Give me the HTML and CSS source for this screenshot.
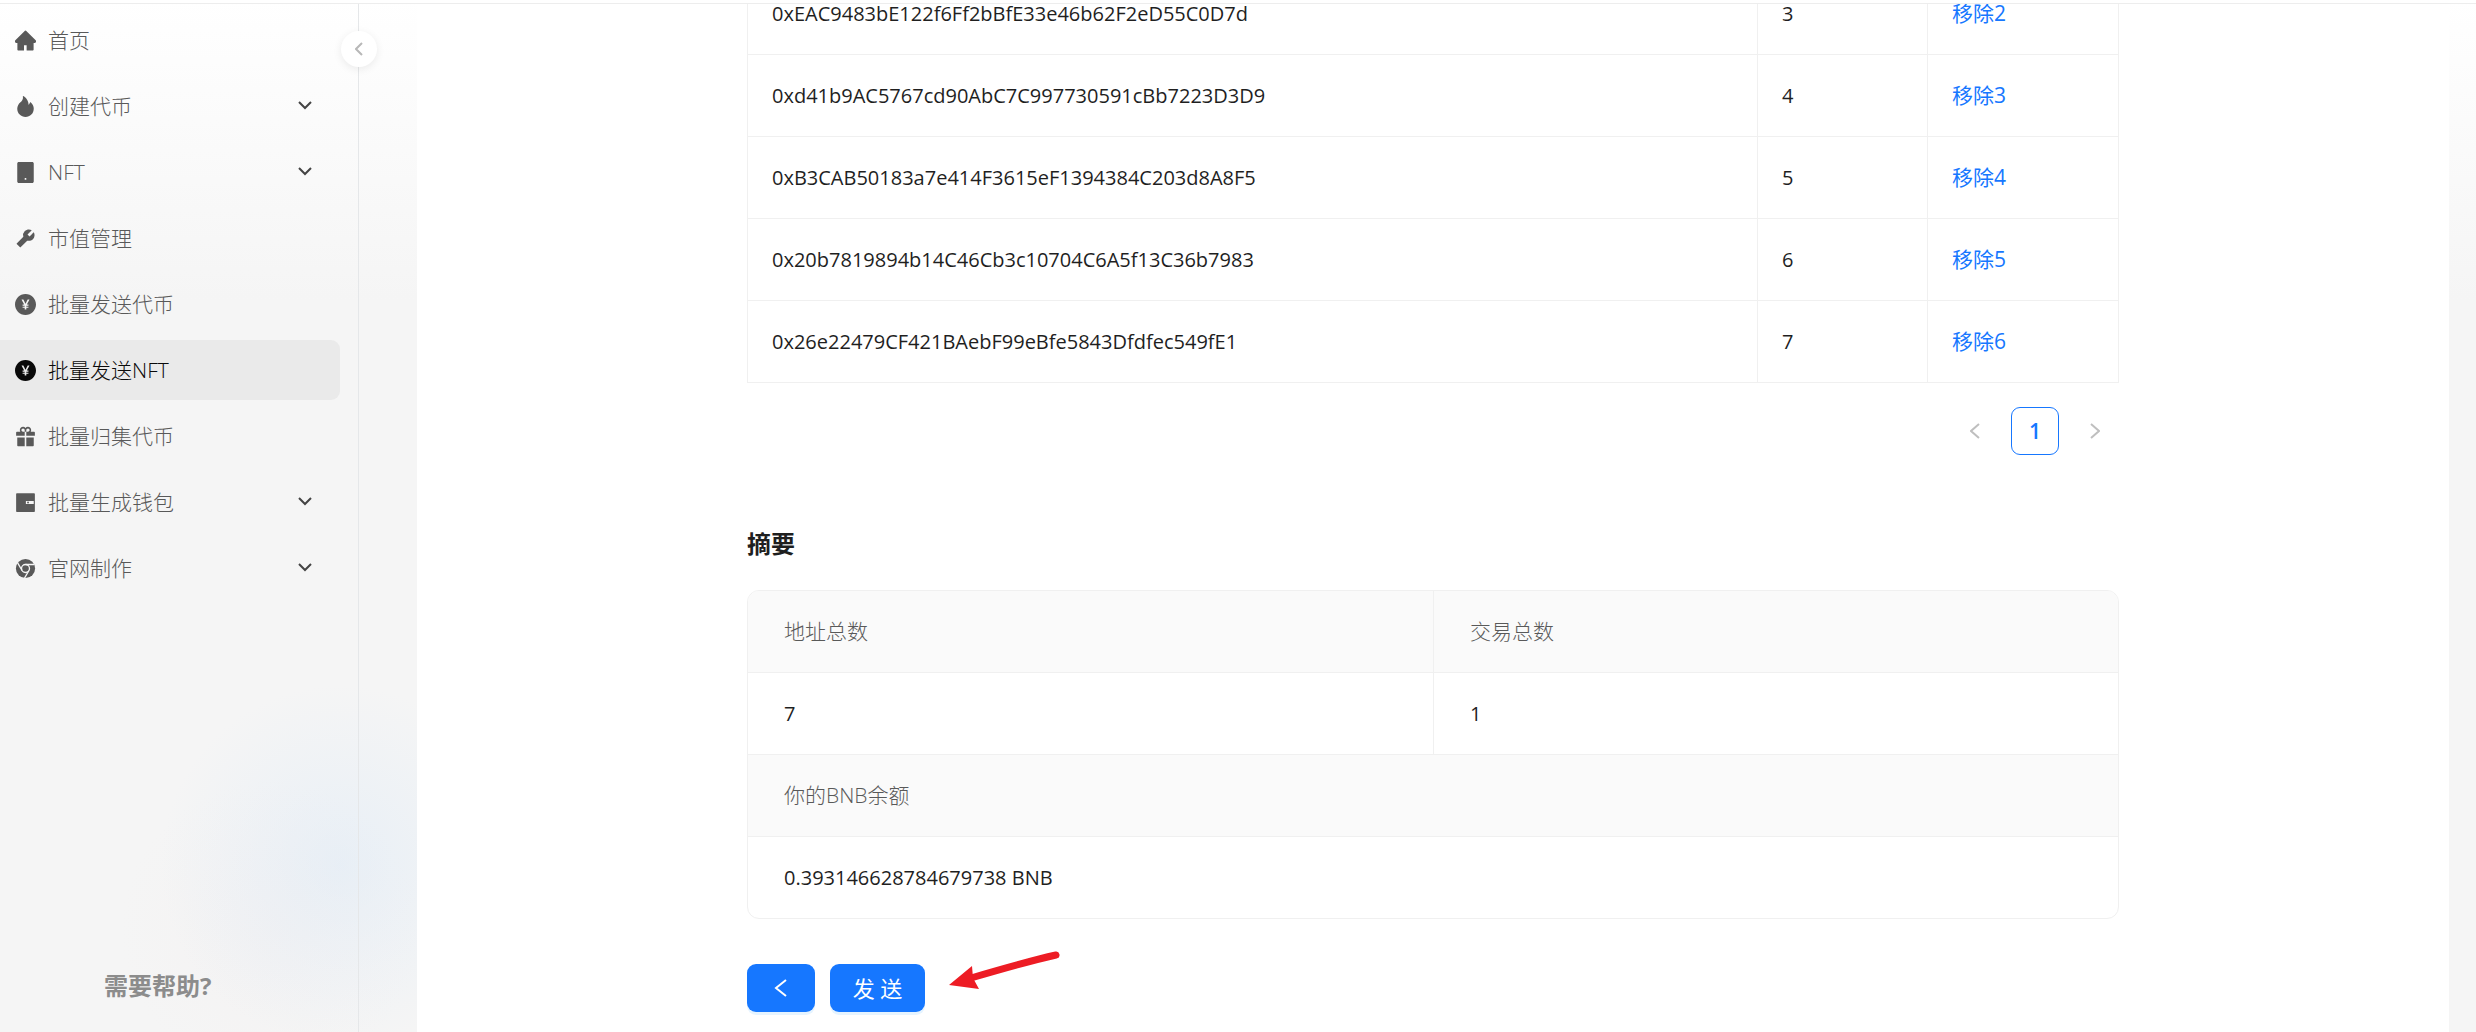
FILE: index.html
```html
<!DOCTYPE html>
<html lang="zh-CN">
<head>
  <meta charset="UTF-8" />
  <meta name="viewport" content="width=device-width, initial-scale=1.0"/>
  <title>批量发送NFT</title>
  <link rel="stylesheet" href="styles.css">
</head>
<body>
  <header class="topbar"></header>

  <div class="layout">
    <aside class="sidebar">
      <nav class="menu">
        <a class="menu-item" href="#">
          <svg class="icon" viewBox="64 64 896 896"><path d="M946.5 505L534.6 93.4a31.93 31.93 0 00-45.2 0L77.5 505c-12 12-18.8 28.3-18.8 45.3 0 35.3 28.7 64 64 64h43.4V908c0 17.7 14.3 32 32 32H448V716h112v224h265.9c17.7 0 32-14.3 32-32V614.3h43.4c17 0 33.3-6.7 45.3-18.8 24.9-25 24.9-65.5-.1-90.5z"/></svg>
          <span>首页</span>
        </a>
        <button class="menu-item" type="button">
          <svg class="icon" viewBox="64 64 896 896"><path d="M834.1 469.2A347.49 347.49 0 00751.2 354l-29.1-26.7a8.09 8.09 0 00-13 3.3l-13 37.3c-8.1 23.4-23 47.3-44.1 70.8-1.4 1.5-3 1.9-4.1 2-1.1.1-2.8-.1-4.3-1.5-1.4-1.2-2.1-3-2-4.8 3.7-60.2-14.3-128.1-53.7-202C555.3 171 510 123.1 453.4 89.7l-41.3-24.3c-5.4-3.2-12.3 1-12 7.3l2.2 48c1.5 32.8-2.3 61.8-11.3 85.9-11 29.5-26.8 56.9-47 81.5a295.64 295.64 0 01-47.5 46.1 352.6 352.6 0 00-100.3 121.5A347.75 347.75 0 00160 610c0 47.2 9.3 92.9 27.7 136a349.4 349.4 0 0075.5 110.9c32.4 32 70 57.2 111.9 74.7C418.5 949.8 464.5 959 512 959s93.5-9.2 136.9-27.3A348.6 348.6 0 00760.8 857c32.4-32 57.8-69.4 75.5-110.9a344.2 344.2 0 0027.7-136c0-48.8-10-96.2-29.9-140.9z"/></svg>
          <span>创建代币</span>
          <svg class="arrow" viewBox="0 0 14 10"><path d="M1 1l6 6 6-6"/></svg>
        </button>
        <button class="menu-item" type="button">
          <svg class="icon" viewBox="64 64 896 896"><path d="M800 64H224c-35.3 0-64 28.7-64 64v768c0 35.3 28.7 64 64 64h576c35.3 0 64-28.7 64-64V128c0-35.3-28.7-64-64-64zM512 824c-22.1 0-40-17.9-40-40s17.9-40 40-40 40 17.9 40 40-17.9 40-40 40z"/></svg>
          <span>NFT</span>
          <svg class="arrow" viewBox="0 0 14 10"><path d="M1 1l6 6 6-6"/></svg>
        </button>
        <a class="menu-item" href="#">
          <svg class="icon" viewBox="64 64 896 896"><path d="M865.3 244.7c-.3-.3-61.1 59.8-182.1 180.6l-84.9-84.9 180.9-180.9c-95.2-57.3-217.5-42.6-296.8 36.7A244.42 244.42 0 00419 432l1.8 6.7-283.5 283.4c-6.2 6.2-6.2 16.4 0 22.6l141.4 141.4c6.2 6.2 16.4 6.2 22.6 0l283.3-283.3 6.7 1.8c83.7 22.3 173.6-.9 236-63.3 79.4-79.3 94.1-201.6 38-296.6z"/></svg>
          <span>市值管理</span>
        </a>
        <a class="menu-item" href="#">
          <svg class="icon" viewBox="64 64 896 896"><path d="M512 64C264.6 64 64 264.6 64 512s200.6 448 448 448 448-200.6 448-448S759.4 64 512 64zm166.6 246.8L567.5 515.6h62c4.4 0 8 3.6 8 8v29.9c0 4.4-3.6 8-8 8h-82V603h82c4.4 0 8 3.6 8 8v29.9c0 4.4-3.6 8-8 8h-82V717c0 4.4-3.6 8-8 8h-54.3c-4.4 0-8-3.6-8-8v-68.1h-81.7c-4.4 0-8-3.6-8-8V611c0-4.4 3.6-8 8-8h81.7v-41.5h-81.7c-4.4 0-8-3.6-8-8v-29.9c0-4.4 3.6-8 8-8h61.7L345.4 310.8a8.07 8.07 0 017-11.9h60.7c3 0 5.8 1.7 7.1 4.4l90.6 180h3.4l90.6-180a8 8 0 017.1-4.4h59.5c4.4 0 8 3.6 8 8 .2 1.4-.2 2.7-.8 3.9z"/></svg>
          <span>批量发送代币</span>
        </a>
        <a class="menu-item active" href="#">
          <svg class="icon" viewBox="64 64 896 896"><path d="M512 64C264.6 64 64 264.6 64 512s200.6 448 448 448 448-200.6 448-448S759.4 64 512 64zm166.6 246.8L567.5 515.6h62c4.4 0 8 3.6 8 8v29.9c0 4.4-3.6 8-8 8h-82V603h82c4.4 0 8 3.6 8 8v29.9c0 4.4-3.6 8-8 8h-82V717c0 4.4-3.6 8-8 8h-54.3c-4.4 0-8-3.6-8-8v-68.1h-81.7c-4.4 0-8-3.6-8-8V611c0-4.4 3.6-8 8-8h81.7v-41.5h-81.7c-4.4 0-8-3.6-8-8v-29.9c0-4.4 3.6-8 8-8h61.7L345.4 310.8a8.07 8.07 0 017-11.9h60.7c3 0 5.8 1.7 7.1 4.4l90.6 180h3.4l90.6-180a8 8 0 017.1-4.4h59.5c4.4 0 8 3.6 8 8 .2 1.4-.2 2.7-.8 3.9z"/></svg>
          <span>批量发送NFT</span>
        </a>
        <a class="menu-item" href="#">
          <svg class="icon" viewBox="64 64 896 896"><path d="M160 894c0 17.7 14.3 32 32 32h286V550H160v344zm386 32h286c17.7 0 32-14.3 32-32V550H546v376zm334-616H732.4c13.6-21.4 21.6-46.8 21.6-74 0-76.1-61.9-138-138-138-41.4 0-78.7 18.4-104 47.4-25.3-29-62.6-47.4-104-47.4-76.1 0-138 61.9-138 138 0 27.2 7.9 52.6 21.6 74H144c-17.7 0-32 14.3-32 32v140h366V310h68v172h366V342c0-17.7-14.3-32-32-32zm-402-4h-70c-38.6 0-70-31.4-70-70s31.4-70 70-70 70 31.4 70 70v70zm138 0h-70v-70c0-38.6 31.4-70 70-70s70 31.4 70 70-31.4 70-70 70z"/></svg>
          <span>批量归集代币</span>
        </a>
        <button class="menu-item" type="button">
          <svg class="icon" viewBox="64 64 896 896"><path fill-rule="evenodd" d="M880 112H144c-17.7 0-32 14.3-32 32v736c0 17.7 14.3 32 32 32h736c17.7 0 32-14.3 32-32V144c0-17.7-14.3-32-32-32zm-16 464H528V448h336v128zM580 512a40 40 0 1080 0 40 40 0 10-80 0z"/></svg>
          <span>批量生成钱包</span>
          <svg class="arrow" viewBox="0 0 14 10"><path d="M1 1l6 6 6-6"/></svg>
        </button>
        <button class="menu-item" type="button">
          <svg class="icon" viewBox="64 64 896 896">
            <circle cx="512" cy="512" r="410"/>
            <path class="chrome-line" d="M512 342H890M659 597L470 925M365 597L176 270"/>
            <circle class="chrome-line" cx="512" cy="512" r="170"/>
          </svg>
          <span>官网制作</span>
          <svg class="arrow" viewBox="0 0 14 10"><path d="M1 1l6 6 6-6"/></svg>
        </button>
      </nav>
      <div class="help">需要帮助?</div>
      <button class="collapse" type="button" aria-label="收起菜单">
        <svg viewBox="0 0 8 14"><path d="M7 1L1 7l6 6"/></svg>
      </button>
    </aside>

    <main class="content">
      <div class="inner">
        <table class="address-table">
          <colgroup>
            <col>
            <col class="col-index">
            <col class="col-action">
          </colgroup>
          <tbody>
            <tr>
              <td>0xEAC9483bE122f6Ff2bBfE33e46b62F2eD55C0D7d</td>
              <td>3</td>
              <td><a href="#">移除2</a></td>
            </tr>
            <tr>
              <td>0xd41b9AC5767cd90AbC7C997730591cBb7223D3D9</td>
              <td>4</td>
              <td><a href="#">移除3</a></td>
            </tr>
            <tr>
              <td>0xB3CAB50183a7e414F3615eF1394384C203d8A8F5</td>
              <td>5</td>
              <td><a href="#">移除4</a></td>
            </tr>
            <tr>
              <td>0x20b7819894b14C46Cb3c10704C6A5f13C36b7983</td>
              <td>6</td>
              <td><a href="#">移除5</a></td>
            </tr>
            <tr>
              <td>0x26e22479CF421BAebF99eBfe5843Dfdfec549fE1</td>
              <td>7</td>
              <td><a href="#">移除6</a></td>
            </tr>
          </tbody>
        </table>

        <div class="pagination">
          <button class="page" type="button" aria-label="上一页" disabled>
            <svg viewBox="0 0 10 16"><path d="M9 1L1 8l8 7"/></svg>
          </button>
          <button class="page current" type="button">1</button>
          <button class="page" type="button" aria-label="下一页" disabled>
            <svg viewBox="0 0 10 16"><path d="M1 1l8 7-8 7"/></svg>
          </button>
        </div>

        <h2 class="title">摘要</h2>
        <table class="summary">
          <tbody>
            <tr>
              <th>地址总数</th>
              <th>交易总数</th>
            </tr>
            <tr>
              <td>7</td>
              <td>1</td>
            </tr>
            <tr>
              <th colspan="2">你的BNB余额</th>
            </tr>
            <tr>
              <td colspan="2">0.393146628784679738 BNB</td>
            </tr>
          </tbody>
        </table>

        <div class="actions">
          <button class="btn back" type="button" aria-label="返回">
            <svg viewBox="0 0 14 18"><path d="M12 1L2 9l10 8"/></svg>
          </button>
          <button class="btn send" type="button">发 送</button>
          <svg class="pointer" viewBox="0 0 112 40">
            <path class="shaft" d="M107 5Q80 11 22 28"/>
            <path class="head" d="M0 35L23 16L24 28L30 39Z"/>
          </svg>
        </div>
      </div>
    </main>
  </div>
</body>
</html>
```

FILE: styles.css
```css
* {
  box-sizing: border-box;
}

body {
  display: flex;
  flex-direction: column;
  height: 100vh;
  margin: 0;
  overflow: hidden;
  font-family: "Open Sans", "Noto Sans CJK SC", sans-serif;
  font-size: 21px;
  font-weight: 380;
  line-height: 33px;
  color: #1f1f1f;
  background:
    radial-gradient(circle at 340px 865px, rgba(208, 228, 248, 0.35), rgba(208, 228, 248, 0) 180px),
    radial-gradient(circle at 270px 930px, rgba(240, 232, 232, 0.2), rgba(240, 232, 232, 0) 150px),
    linear-gradient(#ffffff, #f5f5f5 300px);
}

a {
  color: #1677ff;
  text-decoration: none;
}

button {
  font-family: inherit;
  font-size: inherit;
  font-weight: inherit;
  line-height: inherit;
  cursor: pointer;
}

.topbar {
  flex: none;
  height: 4px;
  background: #fff;
  border-bottom: 1px solid #ededed;
}

.layout {
  display: flex;
  flex: 1;
  min-height: 0;
}

/* sidebar */
.sidebar {
  position: relative;
  display: flex;
  flex-direction: column;
  flex: none;
  width: 359px;
  padding: 6px 18px 30px 0;
  border-right: 1px solid #e5e7e9;
}

.menu {
  display: flex;
  flex-direction: column;
  gap: 6px;
}

.menu-item {
  display: flex;
  align-items: center;
  gap: 12px;
  height: 60px;
  padding: 0 28px 0 15px;
  border: none;
  border-radius: 0 9px 9px 0;
  background: none;
  color: #595959;
  font-weight: 300;
  text-align: left;
}

.menu-item.active {
  background: #eaeaea;
  color: #0a0a0a;
}

.icon {
  width: 21px;
  height: 21px;
  fill: currentColor;
}

.chrome-line {
  fill: none;
  stroke: #f5f5f5;
  stroke-width: 56;
}

.arrow {
  width: 14px;
  height: 10px;
  margin-left: auto;
  fill: none;
  stroke: #444;
  stroke-width: 2;
}

.help {
  margin-top: auto;
  padding-left: 104px;
  font-size: 24px;
  font-weight: 700;
  color: #8c8c8c;
}

.collapse {
  position: absolute;
  top: 27px;
  right: -19px;
  display: flex;
  align-items: center;
  justify-content: center;
  width: 36px;
  height: 36px;
  border: none;
  border-radius: 50%;
  background: #fff;
  box-shadow: 0 2px 9px rgba(0, 0, 0, 0.08);
}

.collapse svg {
  width: 8px;
  height: 14px;
  fill: none;
  stroke: #b8b8b8;
  stroke-width: 2;
}

/* content */
.content {
  flex: 1;
  margin: 0 27px 0 58px;
  padding: 0 24px;
  overflow: hidden;
  background: #fff;
}

.inner {
  max-width: 1372px;
  margin: 0 auto;
}

table {
  width: 100%;
  table-layout: fixed;
  border-collapse: separate;
  border-spacing: 0;
}

.address-table {
  margin-top: -31px;
  border-left: 1px solid #f0f0f0;
}

.address-table td {
  padding: 24px;
  border-right: 1px solid #f0f0f0;
  border-bottom: 1px solid #f0f0f0;
}

.address-table td,
.summary td {
  font-size: 20px;
}

.address-table a {
  font-size: 21px;
}

.col-index {
  width: 170px;
}

.col-action {
  width: 191px;
}

.pagination {
  display: flex;
  justify-content: flex-end;
  gap: 12px;
  margin: 24px 0 72px;
}

.page {
  display: flex;
  align-items: center;
  justify-content: center;
  width: 48px;
  height: 48px;
  padding: 0;
  border: 1px solid transparent;
  border-radius: 9px;
  background: #fff;
}

.page.current {
  border-color: #1677ff;
  color: #1677ff;
  font-weight: 600;
}

.page svg {
  width: 10px;
  height: 16px;
  fill: none;
  stroke: #bfbfbf;
  stroke-width: 2;
}

.title {
  margin: 0 0 30px;
  font-size: 24px;
  font-weight: 700;
  line-height: 33px;
}

.summary {
  border: 1px solid #f0f0f0;
  border-radius: 12px;
  overflow: hidden;
}

.summary th,
.summary td {
  padding: 24px 36px;
  border-bottom: 1px solid #f0f0f0;
  text-align: left;
}

.summary th {
  background: #fafafa;
  color: #595959;
  font-weight: 300;
}

.summary tr > :not(:first-child) {
  border-left: 1px solid #f0f0f0;
}

.summary tr:last-child td {
  border-bottom: none;
}

.actions {
  position: relative;
  display: flex;
  gap: 15px;
  margin: 45px 0 20px;
}

.btn {
  display: flex;
  align-items: center;
  justify-content: center;
  height: 48px;
  border: none;
  border-radius: 9px;
  background: #1677ff;
  color: #fff;
  box-shadow: 0 3px 0 rgba(5, 145, 255, 0.1);
}

.back {
  width: 68px;
}

.back svg {
  width: 14px;
  height: 18px;
  fill: none;
  stroke: #fff;
  stroke-width: 2;
}

.send {
  width: 95px;
  padding: 0;
  font-size: 22px;
}

/* red pointer over the send button row */
.pointer {
  position: absolute;
  top: -14px;
  left: 202px;
  width: 112px;
  height: 40px;
}

.shaft {
  fill: none;
  stroke: #ed1c24;
  stroke-width: 7;
  stroke-linecap: round;
}

.head {
  fill: #ed1c24;
}
```
